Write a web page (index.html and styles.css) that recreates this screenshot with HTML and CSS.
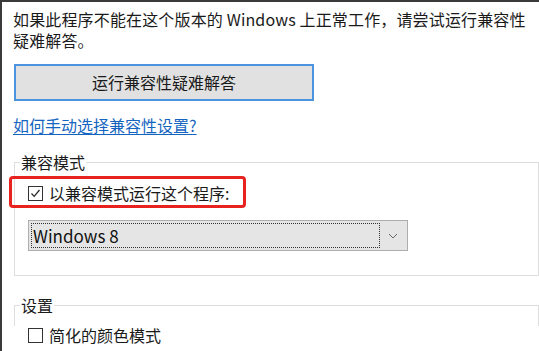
FILE: index.html
```html
<!DOCTYPE html>
<html lang="zh-CN">
<head>
<meta charset="utf-8">
<title>兼容性</title>
<link rel="stylesheet" href="styles.css">
</head>
<body>
<div class="page">
  <p class="intro"><span class="line">如果此程序不能在这个版本的 Windows 上正常工作，请尝试运行兼容性</span><span class="line">疑难解答。</span></p>
  <div class="btn">运行兼容性疑难解答</div>
  <a class="link" href="#">如何手动选择兼容性设置?</a>

  <fieldset class="group group-compat">
    <legend>兼容模式</legend>
    <div class="check-row highlighted">
      <span class="box"><svg width="13" height="13" viewBox="0 0 13 13"><polyline points="2.5,6.5 5.2,9.3 10.5,3" fill="none" stroke="#222" stroke-width="1.2"/></svg></span>
      <span class="label">以兼容模式运行这个程序:</span>
    </div>
    <div class="select">
      <div class="select-value">Windows 8</div>
      <div class="select-arrow"><svg width="10" height="6" viewBox="0 0 10 6"><polyline points="1,1 5,5 9,1" fill="none" stroke="#666" stroke-width="1"/></svg></div>
    </div>
  </fieldset>

  <fieldset class="group group-settings">
    <legend>设置</legend>
    <div class="check-row">
      <span class="box"></span>
      <span class="label">简化的颜色模式</span>
    </div>
  </fieldset>
</div>
</body>
</html>
```
FILE: styles.css
```css
html, body {
  margin: 0;
  padding: 0;
  background: #ffffff;
}
body {
  width: 539px;
  height: 351px;
  overflow: hidden;
  font-family: "Noto Sans CJK SC", "Noto Sans", sans-serif;
  font-size: 16px;
  color: #1a1a1a;
}
.page {
  box-sizing: border-box;
  height: 351px;
  overflow: hidden;
  border-top: 2px solid #3a3a3a;
  border-left: 2px solid #3a3a3a;
  padding-top: 7px;
}
.intro {
  margin: 0 0 0 11px;
  white-space: nowrap;
  letter-spacing: 0.15px;
}
.intro .line {
  display: block;
  height: 21px;
  line-height: 21px;
}
.btn {
  box-sizing: border-box;
  margin: 13px 0 0 12px;
  width: 300px;
  height: 37px;
  background: #e1e1e1;
  border: 2px solid #4a94e0;
  display: flex;
  align-items: center;
  justify-content: center;
  line-height: 21px;
  padding-bottom: 1px;
}
.link {
  display: block;
  width: max-content;
  margin: 14px 0 0 11px;
  line-height: 21px;
  color: #1565c0;
  text-decoration: underline;
  text-underline-offset: 2px;
}
.group {
  margin: 0 0 0 12px;
  padding: 0;
  border: 1px solid #dedede;
  min-width: 0;
}
.group legend {
  margin-left: 5px;
  padding: 0 1px;
  line-height: 21px;
}
.group-compat {
  margin-top: 16px;
  padding-bottom: 24px;
}
.group-settings {
  margin-top: 19px;
  height: 30px;
  border-bottom: none;
}
.check-row {
  position: relative;
  display: flex;
  align-items: center;
  gap: 6px;
  margin-left: 13px;
  height: 21px;
  width: max-content;
}
.group-compat .check-row {
  margin-top: 10px;
}
.group-settings .check-row {
  margin-top: 9px;
}
.highlighted::before {
  content: "";
  position: absolute;
  left: -19px;
  top: -7px;
  width: 237px;
  height: 32px;
  box-sizing: border-box;
  border: 3px solid #e8231f;
  border-radius: 4px;
}
.box {
  box-sizing: border-box;
  width: 15px;
  height: 15px;
  border: 1px solid #333333;
  background: #ffffff;
  display: flex;
  align-items: center;
  justify-content: center;
}
.label {
  line-height: 21px;
}
.select {
  box-sizing: border-box;
  margin: 16px 0 0 13px;
  width: 380px;
  height: 31px;
  background: #e5e5e5;
  border: 1px solid #adadad;
  display: flex;
  padding: 2px;
}
.select-value {
  box-sizing: border-box;
  width: 349px;
  border: 1px dotted #333;
  font-size: 17px;
  line-height: 23px;
  padding-left: 1px;
  color: #111;
}
.select-arrow {
  flex: 1;
  display: flex;
  align-items: center;
  justify-content: center;
  padding-top: 1px;
}
```
